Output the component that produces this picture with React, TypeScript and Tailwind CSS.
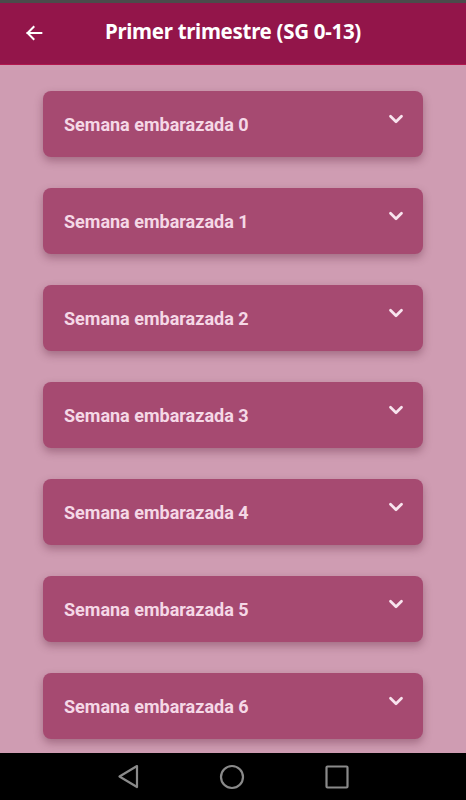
import { ChevronDown } from "lucide-react";

const weeks = [0, 1, 2, 3, 4, 5, 6];

function WeekCard({ week }: { week: number }) {
    return (
        <div className="relative mx-[43px] h-[66px] shrink-0 rounded-[8px] bg-[#a64a71] shadow-[0_4px_8px_rgba(80,20,45,0.35)]">
            <span className="absolute left-[21px] top-[23px] text-[18px] font-bold leading-[22px] text-[#f5d8e6] font-['Roboto',sans-serif]">
                Semana embarazada {week}
            </span>
            <ChevronDown
                className="absolute right-[16px] top-[17px] h-[22px] w-[22px] text-[#f8e4ee]"
                strokeWidth={3}
            />
        </div>
    );
}

export default function App() {
    return (
        <div className="flex h-[800px] w-[466px] flex-col overflow-hidden bg-[#cf9cb2]">
            {/* status strip */}
            <div className="h-[3px] shrink-0 bg-[#4b4b4b]" />

            {/* app bar */}
            <header className="relative flex h-[62px] shrink-0 items-center justify-center border-b border-[#b3174f] bg-[#93154a]">
                <button type="button" aria-label="Volver" className="absolute left-[23px] top-[19px] text-white">
                    <svg width="22" height="22" viewBox="0 0 24 24" fill="none" stroke="currentColor" strokeWidth={2.2} strokeLinecap="square">
                        <path d="M20 12H5" />
                        <path d="M11.5 5.5L5 12l6.5 6.5" />
                    </svg>
                </button>
                <h1 className="-mt-[4px] text-[20.5px] font-bold tracking-[-0.3px] text-white font-['Noto_Sans',sans-serif]">
                    Primer trimestre (SG 0-13)
                </h1>
            </header>

            {/* list */}
            <main className="flex flex-1 flex-col gap-[31px] overflow-hidden pt-[26px]">
                {weeks.map((w) => (
                    <WeekCard key={w} week={w} />
                ))}
            </main>

            {/* nav bar */}
            <nav className="flex h-[47px] shrink-0 items-center justify-center gap-[80px] bg-black text-[#8a8a8a]">
                <svg width="22" height="25" viewBox="0 0 22 25" fill="none" stroke="currentColor" strokeWidth={2.2} strokeLinejoin="round">
                    <path d="M20 2L2.5 12.5 20 23z" />
                </svg>
                <svg width="26" height="26" viewBox="0 0 26 26" fill="none" stroke="currentColor" strokeWidth={2.2}>
                    <circle cx="13" cy="13" r="11" />
                </svg>
                <svg width="24" height="24" viewBox="0 0 24 24" fill="none" stroke="currentColor" strokeWidth={2.2} strokeLinejoin="round">
                    <rect x="1.5" y="1.5" width="21" height="21" rx="1" />
                </svg>
            </nav>
        </div>
    );
}
